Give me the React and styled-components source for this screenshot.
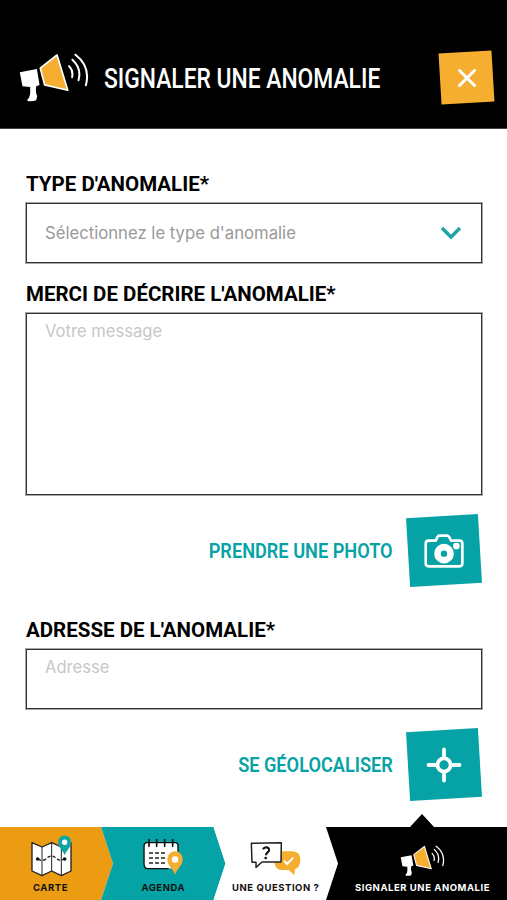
import { useState } from "react";
import styled, { createGlobalStyle } from "styled-components";

const GlobalStyle = createGlobalStyle`
* {
  box-sizing: border-box;
}
body {
  margin: 0;
  background-color: white;
}
svg {
  flex-shrink: 0;
}
`;

const Container = styled.div`
width: 100%;
height: 100vh;
overflow: hidden;
display: flex;
flex-direction: column;
font-family: "Inter", sans-serif;
background-color: white;
`;
const Header = styled.header`
height: 129px;
flex-shrink: 0;
padding: 27px 14px 0px 17px;
display: flex;
align-items: center;
background-color: black;
border-bottom: 1px solid #444;
`;
const Title = styled.h1`
flex: 1;
min-width: 0px;
margin: 3px 0px 0px 13px;
font-family: "Roboto", sans-serif;
font-size: 28px;
font-weight: 500;
line-height: 32px;
white-space: nowrap;
color: white;
transform: scaleX(0.815);
transform-origin: left center;
`;
const Tile = styled.button`
width: ${(props) => props.$width}px;
height: ${(props) => props.$height}px;
flex-shrink: 0;
border: none;
padding: 0px;
display: flex;
align-items: center;
justify-content: center;
background-color: ${(props) => props.$color};
transform: rotate(-3.4deg);
cursor: pointer;

svg {
  transform: rotate(3.4deg);
}
`;
const Form = styled.form`
flex: 1;
padding: 43px 25px 0px 26px;
display: flex;
flex-direction: column;
`;
const Label = styled.label`
height: 31px;
font-family: "Roboto", sans-serif;
font-size: 20.5px;
font-weight: 700;
line-height: 24px;
white-space: nowrap;
color: black;
`;
const Select = styled.div`
height: 60px;
margin-bottom: 19px;
padding: 0px 19px 0px 18px;
border: 1px solid #333;
box-shadow: 0 0 0 1px rgba(0, 0, 0, 0.35);
display: flex;
align-items: center;
justify-content: space-between;
font-size: 16.7px;
color: #999;
cursor: pointer;
`;
const TextArea = styled.textarea`
height: ${(props) => props.$height}px;
margin: 0px 0px 1px;
padding: 6px 18px;
border: 1px solid #333;
box-shadow: 0 0 0 1px rgba(0, 0, 0, 0.35);
border-radius: 0px;
outline: none;
resize: none;
font-family: "Inter", sans-serif;
font-size: 16.6px;
line-height: 22px;
color: black;

&::placeholder {
  color: #c7c7c9;
}
`;
const Action = styled.div`
height: ${(props) => props.$height}px;
padding-top: ${(props) => props.$top}px;
padding-right: 2px;
display: flex;
align-items: flex-start;
justify-content: flex-end;
gap: 15px;
`;
const ActionText = styled.span`
font-family: "Roboto", sans-serif;
font-size: 21px;
font-weight: 600;
line-height: 70px;
white-space: nowrap;
color: #05a3a5;
transform: scaleX(0.865);
transform-origin: right center;
`;
const Nav = styled.nav`
height: 86px;
flex-shrink: 0;
display: flex;
align-items: flex-end;
`;
const shapes = {
  first: "polygon(0 0, calc(100% - 12px) 0, 100% 50%, calc(100% - 12px) 100%, 0 100%)",
  middle: "polygon(0 0, calc(100% - 12px) 0, 100% 50%, calc(100% - 12px) 100%, 0 100%, 12px 50%)",
  last: "polygon(0 13px, 84px 13px, 96px 0, 108px 13px, 100% 13px, 100% 100%, 0 100%, 12px 49.5px)",
};
const NavItem = styled.a`
width: ${(props) => props.$width}px;
height: ${(props) => (props.$shape === "last" ? 86 : 73)}px;
margin-left: ${(props) => (props.$shape === "first" ? 0 : -12)}px;
padding: ${(props) => props.$padding};
flex-shrink: 0;
display: flex;
flex-direction: column;
align-items: center;
justify-content: flex-end;
background-color: ${(props) => props.$color};
color: ${(props) => props.$text || "#111"};
clip-path: ${(props) => shapes[props.$shape]};
cursor: pointer;
`;
const NavText = styled.span`
margin-top: ${(props) => props.$top || 4}px;
font-size: 9.5px;
font-weight: 700;
line-height: 14px;
letter-spacing: 0.55px;
white-space: nowrap;
`;

const Megaphone = ({ width, height }) => (
  <svg width={width} height={height} viewBox="50 35 220 155" fill="none">
    <path d="M58 95L109 86L117 133L107 137Q104 156 110 166L107 179Q95 184 81 181V176Q91 170 89 139L66 137Z" fill="white" />
    <path d="M119 83L169 44L201 149L132 133Z" fill="#f6ae31" stroke="white" strokeWidth="5" strokeLinejoin="round" />
    <path d="M205 77Q218 90 214 110M215 58Q243 84 233 119M224 43Q270 78 255 134" stroke="white" strokeWidth="6" strokeLinecap="round" />
  </svg>
);

const Pin = ({ color }) => (
  <>
    <path d="M0 34C-4 20-18 14-18-3A18 18 0 0 1 18-3C18 14 4 20 0 34Z" fill={color} />
    <circle cx="0" cy="-2" r="7.5" fill="white" />
  </>
);

const CloseIcon = () => (
  <svg width="20" height="20" viewBox="0 0 20 20" stroke="white" strokeWidth="3" strokeLinecap="round">
    <path d="M2.5 2.5L17.5 17.5M17.5 2.5L2.5 17.5" />
  </svg>
);

const ChevronIcon = () => (
  <svg width="22" height="14" viewBox="0 0 22 14" fill="none" stroke="#1fa3a4" strokeWidth="3.4" strokeLinejoin="miter">
    <path d="M2 2L11 11L20 2" />
  </svg>
);

const CameraIcon = () => (
  <svg width="40" height="34" viewBox="0 0 120 102" fill="none">
    <path d="M14 20H35L41 8Q42 5 46 5H69Q73 5 75 8L81 20H106Q115 20 115 29V88Q115 97 106 97H14Q5 97 5 88V29Q5 20 14 20Z" stroke="white" strokeWidth="8" strokeLinejoin="round" />
    <circle cx="60" cy="59" r="19.5" stroke="white" strokeWidth="20" />
    <circle cx="97" cy="36" r="10" fill="white" />
  </svg>
);

const LocateIcon = () => (
  <svg width="36" height="36" viewBox="0 0 36 36" fill="none" stroke="white" strokeWidth="3.8" strokeLinecap="round">
    <circle cx="18" cy="18" r="6.6" />
    <path d="M18 2.5V10M18 26V33.5M2.5 18H10M26 18H33.5" />
  </svg>
);

const MapIcon = () => (
  <svg width="44" height="42" viewBox="87 74 132 126">
    <path d="M96 97L126 110L155 97L184 110L213 97V182L184 196L155 182L126 196L96 182Z" fill="white" stroke="#222" strokeWidth="4" strokeLinejoin="round" />
    <path d="M126 110V195M155 97V182M184 110V195" stroke="#222" strokeWidth="3" />
    <path d="M114 146Q126 154 136 147Q155 128 169 145Q180 153 194 146" fill="none" stroke="#222" strokeWidth="4" strokeDasharray="10 6" />
    <circle cx="113" cy="146" r="5.5" fill="#111" />
    <circle cx="194" cy="146" r="5.5" fill="#111" />
    <g transform="translate(194 98) scale(1.08)">
      <Pin color="#10a5a5" />
    </g>
  </svg>
);

const CalendarIcon = () => (
  <svg width="42" height="38" viewBox="144 84 126 114">
    <path d="M158 99H244Q251 99 251 106V168Q251 175 244 175H160Q151 175 151 164V107Q151 99 158 99Z" fill="white" />
    <path d="M158 98Q150 99 150 108V162Q151 176 161 176H222M158 98H245Q252 99 252 107V124" fill="none" stroke="#111" strokeWidth="4" strokeLinecap="round" />
    <path d="M165 89V109M188 89V109M212 89V109M236 89V109" stroke="#111" strokeWidth="5" strokeLinecap="round" />
    <path d="M165 129H213M165 144H213M165 159H213" stroke="#222" strokeWidth="4" strokeDasharray="12 6" />
    <g transform="translate(243 151) scale(1.28)">
      <Pin color="#f6ae31" />
    </g>
  </svg>
);

const QuestionIcon = () => (
  <svg width="52" height="36" viewBox="106 94 156 108">
    <path d="M203 125H234Q257 126 257 151Q257 173 241 179L239 196L222 181H199Q181 178 180 161V125Z" fill="#f6ae31" />
    <path d="M208 153L217 163L236 144" fill="none" stroke="white" strokeWidth="6" />
    <path d="M110 101L200 99L199 157H142L124 173V158H112Z" fill="white" stroke="#222" strokeWidth="4.5" strokeLinejoin="round" />
    <path d="M145 119Q148 112 156 113Q166 116 162 125Q154 131 154 137" fill="none" stroke="#111" strokeWidth="6.5" />
    <circle cx="153" cy="145" r="4" fill="#111" />
  </svg>
);

const App = () => {
  const [form, setForm] = useState({
    message: "",
    address: "",
  });

  return (
    <Container>
      <GlobalStyle />
      <Header>
        <Megaphone width={74} height={52} />
        <Title>SIGNALER UNE ANOMALIE</Title>
        <Tile $width={53} $height={51} $color="#f6ae31" aria-label="Fermer">
          <CloseIcon />
        </Tile>
      </Header>
      <Form>
        <Label>TYPE D'ANOMALIE*</Label>
        <Select>
          <span>Sélectionnez le type d'anomalie</span>
          <ChevronIcon />
        </Select>
        <Label>MERCI DE DÉCRIRE L'ANOMALIE*</Label>
        <TextArea
          $height={182}
          placeholder="Votre message"
          value={form.message}
          onChange={(e) => setForm({ ...form, message: e.target.value })}
        />
        <Action $height={122} $top={20}>
          <ActionText>PRENDRE UNE PHOTO</ActionText>
          <Tile type="button" $width={72} $height={69} $color="#05a3a5" aria-label="Prendre une photo">
            <CameraIcon />
          </Tile>
        </Action>
        <Label>ADRESSE DE L'ANOMALIE*</Label>
        <TextArea
          $height={60}
          placeholder="Adresse"
          value={form.address}
          onChange={(e) => setForm({ ...form, address: e.target.value })}
        />
        <Action $height={89} $top={20}>
          <ActionText>SE GÉOLOCALISER</ActionText>
          <Tile type="button" $width={72} $height={69} $color="#05a3a5" aria-label="Se géolocaliser">
            <LocateIcon />
          </Tile>
        </Action>
      </Form>
      <Nav>
        <NavItem $shape="first" $width={113} $color="#eb9c12" $padding="0px 12px 5px 0px">
          <MapIcon />
          <NavText>CARTE</NavText>
        </NavItem>
        <NavItem $shape="middle" $width={124.5} $color="#05a3a5" $padding="0px 0px 5px 0px">
          <CalendarIcon />
          <NavText $top={5}>AGENDA</NavText>
        </NavItem>
        <NavItem $shape="middle" $width={124.5} $color="white" $padding="0px 0px 5px 0px">
          <QuestionIcon />
          <NavText>UNE QUESTION ?</NavText>
        </NavItem>
        <NavItem $shape="last" $width={181} $color="black" $text="white" $padding="0px 0px 5px 12px">
          <Megaphone width={47} height={34} />
          <NavText $top={3}>SIGNALER UNE ANOMALIE</NavText>
        </NavItem>
      </Nav>
    </Container>
  );
};

export default App;
